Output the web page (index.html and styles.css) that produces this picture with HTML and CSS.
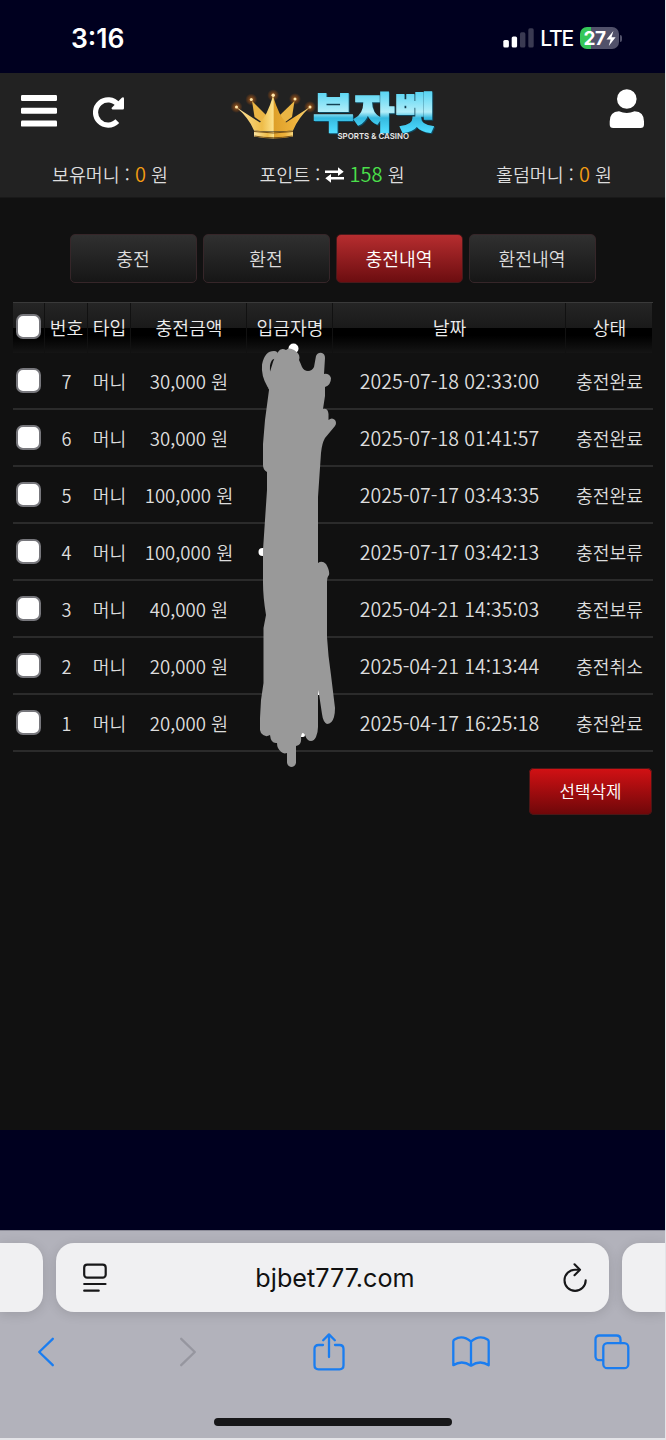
FILE: index.html
```html
<!DOCTYPE html>
<html lang="ko">
	<head>
		<meta charset="utf-8">
		<title>충전내역</title>
		<link rel="stylesheet" href="styles.css">
	</head>
	<body>
		<div id="phone">
			<div class="status">
				<span class="time">3:16</span>
				<div class="status_right">
					<svg class="signal" width="32" height="20" viewBox="0 0 32 20">
						<rect x="0.3" y="12" width="5.6" height="7.5" rx="1.6" fill="#fff"/>
						<rect x="8.7" y="8.5" width="5.4" height="11" rx="1.6" fill="#fff"/>
						<rect x="17" y="4.3" width="5.4" height="15.2" rx="1.6" fill="#3a3a52"/>
						<rect x="25.3" y="0.3" width="5.4" height="19.2" rx="1.6" fill="#3a3a52"/>
					</svg>
					<span class="lte">LTE</span>
					<div class="battery">
						<span>27</span>
						<svg width="10" height="15" viewBox="0 0 10 15"><path d="M7.4 0L0.5 8.4H4.6L2.8 15L9.6 6.3H5.5Z" fill="#fff"/></svg>
					</div>
				</div>
			</div>

			<div class="header">
				<div class="top">
					<div class="top_left">
						<svg width="36" height="34" viewBox="0 0 36 34" fill="#fff">
							<rect y="1" width="36" height="6" rx="1.2"/>
							<rect y="13.8" width="36" height="6" rx="1.2"/>
							<rect y="26.6" width="36" height="6" rx="1.2"/>
						</svg>
						<svg width="32" height="32" viewBox="0 0 32 32">
							<path d="M24.3 25.1A12.6 12.6 0 1 1 25 8.6" fill="none" stroke="#fff" stroke-width="5.2"/>
							<path d="M31 2.2V12.3Q31 13.6 29.7 13.6H19.5Q17.8 13 19 11.6L28.8 1.7Q30.5 .5 31 2.2Z" fill="#fff"/>
						</svg>
					</div>
					<svg class="logo" width="212" height="60" viewBox="228 84 212 60">
						<defs>
							<linearGradient id="gold" x1="0" x2="1" y1="0" y2="0">
								<stop offset="0" stop-color="#fbe3a0"/>
								<stop offset=".35" stop-color="#eebc48"/>
								<stop offset=".5" stop-color="#fbe08a"/>
								<stop offset=".52" stop-color="#dea02a"/>
								<stop offset=".8" stop-color="#efb33c"/>
								<stop offset="1" stop-color="#f7d77e"/>
							</linearGradient>
							<linearGradient id="ice" gradientUnits="userSpaceOnUse" x1="0" x2="0" y1="92" y2="132">
								<stop offset="0" stop-color="#59d5f3"/>
								<stop offset=".5" stop-color="#b2eef9"/>
								<stop offset=".65" stop-color="#35b9df"/>
								<stop offset="1" stop-color="#4fdcff"/>
							</linearGradient>
							<radialGradient id="glow">
								<stop offset="0" stop-color="#ff8a20" stop-opacity=".6"/>
								<stop offset="1" stop-color="#ff6a00" stop-opacity="0"/>
							</radialGradient>
						</defs>
						<g fill="url(#glow)">
							<circle cx="236.5" cy="107" r="6"/>
							<circle cx="251.3" cy="99.5" r="6"/>
							<circle cx="273.2" cy="95.2" r="6"/>
							<circle cx="295" cy="99" r="6"/>
							<circle cx="310" cy="107" r="6"/>
						</g>
						<path d="M252 101L254.5 117L263 123L266 115Z" fill="#eab544"/>
						<path d="M294.5 101L292 117L284 123L280 115Z" fill="#eab544"/>
						<path d="M236 107L260 122.5Q267 116 273 96Q279 116 286 122.5L310 107Q298 118 293 130.5Q273 132.5 254 130.5Q249 118 236 107Z" fill="url(#gold)"/>
						<path d="M254 130.5Q273 133.500 293 130.500V136.500Q273 140.500 254 136.500Z" fill="url(#gold)"/>
						<path d="M254 131.500Q273 134.500 293 131.500M254.500 136Q273 139.500 292.500 136" fill="none" stroke="#6b4510" stroke-width=".9"/>
						<g fill="#ffe7ac">
							<circle cx="236.5" cy="107" r="1.5"/>
							<circle cx="251.3" cy="99.5" r="1.5"/>
							<circle cx="273.2" cy="95.2" r="1.7"/>
							<circle cx="295" cy="99" r="1.5"/>
							<circle cx="310" cy="107" r="1.5"/>
						</g>
						<text class="logo_name" x="313" y="127.5" textLength="122" lengthAdjust="spacingAndGlyphs">부자벳</text>
						<text class="logo_sub" x="337.5" y="139" textLength="71.5" lengthAdjust="spacingAndGlyphs">SPORTS &amp; CASINO</text>
					</svg>
					<svg class="user" width="36" height="40" viewBox="0 0 36 40" fill="#fff">
						<circle cx="17.8" cy="10" r="9.8"/>
						<path d="M10 22.2Q17.8 25.7 25.6 22.2Q35 22.5 35 32.5V35.5Q35 39 31.5 39H4.2Q.7 39 .7 35.5V32.5Q.7 22.5 10 22.2Z"/>
					</svg>
				</div>
				<div class="money">
					<p>보유머니 : <b class="orange">0</b> 원</p>
					<p>포인트 : <svg width="19" height="16" viewBox="0 0 19 16" fill="#fff"><path d="M0 3.4H13V.3L18.700 4.700L13 9V6H0Z"/><path d="M19 10H6V7L.3 11.300L6 15.700V12.600H19Z"/></svg> <b class="green">158</b> 원</p>
					<p>홀덤머니 : <b class="orange">0</b> 원</p>
				</div>
			</div>

			<div class="content">
				<div class="tabs">
					<a>충전</a>
					<a>환전</a>
					<a class="on">충전내역</a>
					<a>환전내역</a>
				</div>
				<div class="list">
					<table>
						<colgroup>
							<col class="c1"><col class="c2"><col class="c3"><col class="c4"><col class="c5"><col class="c6"><col class="c7">
						</colgroup>
						<thead>
							<tr><th><i class="check"></i></th><th>번호</th><th>타입</th><th>충전금액</th><th>입금자명</th><th>날짜</th><th>상태</th></tr>
						</thead>
						<tbody>
							<tr><td><i class="check"></i></td><td>7</td><td>머니</td><td class="num">30,000 원</td><td></td><td class="date">2025-07-18 02:33:00</td><td>충전완료</td></tr>
							<tr><td><i class="check"></i></td><td>6</td><td>머니</td><td class="num">30,000 원</td><td></td><td class="date">2025-07-18 01:41:57</td><td>충전완료</td></tr>
							<tr><td><i class="check"></i></td><td>5</td><td>머니</td><td class="num">100,000 원</td><td></td><td class="date">2025-07-17 03:43:35</td><td>충전완료</td></tr>
							<tr><td><i class="check"></i></td><td>4</td><td>머니</td><td class="num">100,000 원</td><td></td><td class="date">2025-07-17 03:42:13</td><td>충전보류</td></tr>
							<tr><td><i class="check"></i></td><td>3</td><td>머니</td><td class="num">40,000 원</td><td></td><td class="date">2025-04-21 14:35:03</td><td>충전보류</td></tr>
							<tr><td><i class="check"></i></td><td>2</td><td>머니</td><td class="num">20,000 원</td><td></td><td class="date">2025-04-21 14:13:44</td><td>충전취소</td></tr>
							<tr><td><i class="check"></i></td><td>1</td><td>머니</td><td class="num">20,000 원</td><td></td><td class="date">2025-04-17 16:25:18</td><td>충전완료</td></tr>
						</tbody>
					</table>
					<!-- marker over the depositor names -->
					<svg class="marker" width="85" height="430" viewBox="255 340 85 430">
						<g fill="#fff">
							<circle cx="293.500" cy="348.500" r="5"/>
							<circle cx="262.500" cy="552" r="4"/>
							<rect x="299" y="726" width="6" height="11" rx="2"/>
							<rect x="316" y="688" width="4" height="7"/>
							<circle cx="270" cy="388" r="1.500"/>
						</g>
						<path d="M274 355Q268 355 266 365Q265 375 271 385" fill="none" stroke="#999" stroke-width="8" stroke-linecap="round"/>
						<path fill="#999" d="M273 362Q274 359 278 352Q281 347 286 350Q289 347 294 350Q301 354 299 360Q300 362 302 367Q304 371 308 371Q312 371 314 367L316 356Q318 352 322 353Q325 354 325 358L324 374Q329 373 331 378Q331 385 325 387V396L323 409Q328 408 328.500 414V420Q332 417 335 420Q337 423 335 426L325 438Q322 443 321 453L318 497V563Q322 560 326 564Q330 571 329 575Q327 577 327 582V637Q328 655 331 675L335 708Q335 713 334 717Q332 724 327 724Q323 722 322 714L319 694L318 690V727Q318 732 316 737Q314 741 311 741Q307 741 305 735Q302 730 301 737Q302 745 296 746L296 763Q295 767 291 767Q287 766 287 762V753Q282 755 278 748Q277 746 277 743Q271 744 270 735Q265 738 261 733L260 730V718L261 700L263.500 683V628L266 615Q263 597 263 583V550L266 505L267 490V472Q263 470 263 465V444L265 420L269 390V375Z"/>
					</svg>
				</div>
				<a class="del">선택삭제</a>
			</div>

			<div class="browser">
				<div class="address">
					<div class="side left"></div>
					<div class="url">
						<svg width="24" height="30" viewBox="0 0 24 30" fill="none" stroke="#171719" stroke-width="2.2" stroke-linecap="round">
							<rect x="1.2" y="1.7" width="21.5" height="13" rx="3"/>
							<path d="M1.2 21H22.5M1.2 27.7H15.7"/>
						</svg>
						<span>bjbet777.com</span>
						<svg width="24" height="30" viewBox="0 0 24 30" fill="none" stroke="#171719" stroke-width="2.1" stroke-linecap="round" stroke-linejoin="round">
							<path d="M16 6.7H12.2A10.6 10.6 0 1 0 22.7 17.3"/>
							<path d="M11.5 1.3L17 6.8L11.5 12.2"/>
						</svg>
					</div>
					<div class="side right"></div>
				</div>
				<div class="tools">
					<svg height="30" viewBox="0 0 18 30"><path d="M15.800 1.800L2.200 15L15.800 28.200"/></svg>
					<svg class="off" height="30" viewBox="0 0 18 30"><path d="M2.200 1.800L15.800 15L2.200 28.200"/></svg>
					<svg height="38" viewBox="0 0 32 38"><path d="M10 12H5.500Q1.500 12 1.500 16V32.300Q1.500 36.300 5.500 36.300H26.500Q30.500 36.300 30.500 32.300V16Q30.500 12 26.500 12H22M16 24V1.500M10.200 7.200L16 1.400L21.800 7.200"/></svg>
					<svg height="32" viewBox="0 0 38 32"><path d="M19 5.500Q10.500-1.500 2.500 3.500Q1.300 4.300 1.300 5.500V29.200Q10 23.500 19 29.700Q28 23.500 36.700 29.200V5.500Q36.700 4.300 35.500 3.500Q27.500-1.500 19 5.500V29.700"/></svg>
					<svg height="36" viewBox="0 0 36 36"><path d="M9 26.200H5.500Q1.500 26.200 1.500 22.200V5.500Q1.500 1.500 5.500 1.500H22.500Q26.500 1.500 26.500 5.500V9"/><rect x="9.300" y="9.200" width="25" height="25" rx="4"/></svg>
				</div>
				<div class="bar"></div>
			</div>
		</div>
	</body>
</html>
```
FILE: styles.css
```css
body,p{margin:0;}
body{
	background:#e4e4e8;
	font-family:"Noto Sans CJK KR","Noto Sans",sans-serif;
}
svg{display:block;flex:none;}
#phone{
	width:665px;
	height:1438px;
	overflow:hidden;
	background:#00001f;
}

.status{
	display:flex;
	justify-content:space-between;
	align-items:center;
	box-sizing:border-box;
	height:73px;
	padding:3px 45px 0 71px;
	color:#fff;
	font-family:Inter,sans-serif;
}
.time{
	font-size:26.5px;
	font-weight:600;
}
.status_right{
	display:flex;
	align-items:center;
}
.lte{
	margin:0 7px 0 5px;
	font-size:21px;
	font-weight:500;
	letter-spacing:-1.2px;
}
.battery{
	position:relative;
	display:flex;
	align-items:center;
	justify-content:center;
	width:39px;
	height:22px;
	margin-right:1px;
	border-radius:7px;
	background:linear-gradient(90deg,#35c759 27%,#51516a 27%);
	font-size:19px;
	font-weight:700;
	letter-spacing:-.5px;
}
.battery:after{
	content:"";
	position:absolute;
	right:-3px;
	top:8px;
	width:2px;
	height:7px;
	border-radius:0 2px 2px 0;
	background:#51516a;
}

.header{
	box-sizing:border-box;
	height:125px;
	background:#222;
	border-bottom:1px solid #191919;
}
.top{
	display:flex;
	height:76px;
	padding:11px 21px 0;
	box-sizing:border-box;
}
.top_left{
	display:flex;
	gap:36px;
	width:207px;
	padding-top:10px;
}
.top_left svg + svg{margin-top:2px;}
.user{margin:5px -1px 0 auto;}
.logo{overflow:visible;}
.logo_name{
	font-family:"Noto Sans CJK KR",sans-serif;
	font-size:42px;
	font-weight:900;
	fill:url(#ice);
	stroke:url(#ice);
	stroke-width:1.5px;
	filter:drop-shadow(1px 1px 0 #0e4a62);
}
.logo_sub{
	font-family:Inter,sans-serif;
	font-size:8px;
	font-weight:600;
	fill:#e8e8e8;
}
.money{
	display:flex;
	justify-content:space-between;
	padding:12px 53px 0 52px;
	color:#ddd;
	font-size:18.4px;
	line-height:26px;
	font-weight:350;
}
.money svg{
	display:inline-block;
	vertical-align:-1px;
}
.money p{white-space:nowrap;}
.money b{
	font-size:20px;
	font-weight:350;
}
.orange{color:#f39c12;}
.green{color:#4be04b;}

.content{
	box-sizing:border-box;
	height:932px;
	padding:36px 13px 0;
	background:#111;
	color:#ddd;
	font-size:18.2px;
	font-weight:350;
}
.tabs{
	display:flex;
	justify-content:center;
	gap:6px;
}
.tabs a{
	box-sizing:border-box;
	width:127px;
	height:49px;
	border:1px solid #362629;
	border-radius:5px;
	background:linear-gradient(#303030,#161616);
	line-height:46px;
	text-align:center;
}
.tabs a.on{
	border-color:#4a191b;
	background:linear-gradient(#b62d2f,#6c0d10);
	color:#fff;
}
.list{
	position:relative;
	margin-top:19px;
}
table{
	width:640px;
	table-layout:fixed;
	border-collapse:separate;
	border-spacing:0;
}
.c1{width:32px;}
.c2{width:43px;}
.c3{width:43px;}
.c4{width:116px;}
.c5{width:86px;}
.c6{width:233px;}
.c7{width:87px;}
th,td{
	padding:0;
	box-sizing:border-box;
	text-align:center;
	white-space:nowrap;
}
th{
	height:51px;
	padding-bottom:3px;
	border-top:1px solid #3a3a3a;
	background:linear-gradient(#252525,#1a1a1a 49%,#000 50%,#000 65%,#151515);
	box-shadow:inset -1px 0 #111;
	font-weight:350;
	color:#eee;
}
td{
	height:57px;
	border-bottom:2px solid #2b2b2b;
}
.num{font-size:18.6px;}
.date{font-size:19.500px;}
.check{
	display:block;
	box-sizing:border-box;
	width:25px;
	height:25px;
	margin:0 0 0 3px;
	border:2px solid #77777c;
	border-radius:7px;
	background:#fff;
}
/* freehand strokes, drawn over the table */
.marker{
	position:absolute;
	left:242px;
	top:38px;
}
.del{
	display:block;
	width:123px;
	height:47px;
	margin:16px 0 0 auto;
	border-radius:5px;
	background:linear-gradient(#d31114,#6d0709);
	box-shadow:inset 0 0 0 1px #4a1717;
	color:#fff;
	font-size:16.8px;
	line-height:46px;
	text-align:center;
}

.browser{
	box-sizing:border-box;
	height:208px;
	margin-top:100px;
	padding-top:12px;
	background:#b2b2bb;
	border-top:1px solid #8d8d99;
}
.address{
	display:flex;
	gap:13px;
	height:69px;
}
.side,.url{
	background:#f0f0f2;
	box-shadow:0 2px 12px rgba(0,0,0,.13);
}
.left{
	width:43px;
	border-radius:0 18px 18px 0;
}
.right{
	flex:1;
	border-radius:18px 0 0 18px;
}
.url{
	display:flex;
	align-items:center;
	justify-content:space-between;
	box-sizing:border-box;
	width:553px;
	padding:0 22px 0 27px;
	border-radius:18px;
	color:#111;
	font-family:Inter,sans-serif;
	font-size:25.2px;
}
.tools{
	display:flex;
	align-items:center;
	justify-content:space-between;
	height:38px;
	margin-top:21px;
	padding:0 34px 0 27px;
	fill:none;
	stroke:#1a7df0;
	stroke-width:2.3;
	stroke-linecap:round;
	stroke-linejoin:round;
}
.tools svg{width:38px;}
.tools .off{stroke:#96969f;}
.bar{
	width:238px;
	height:8px;
	margin:47px auto 0;
	border-radius:4px;
	background:#171719;
}
```
